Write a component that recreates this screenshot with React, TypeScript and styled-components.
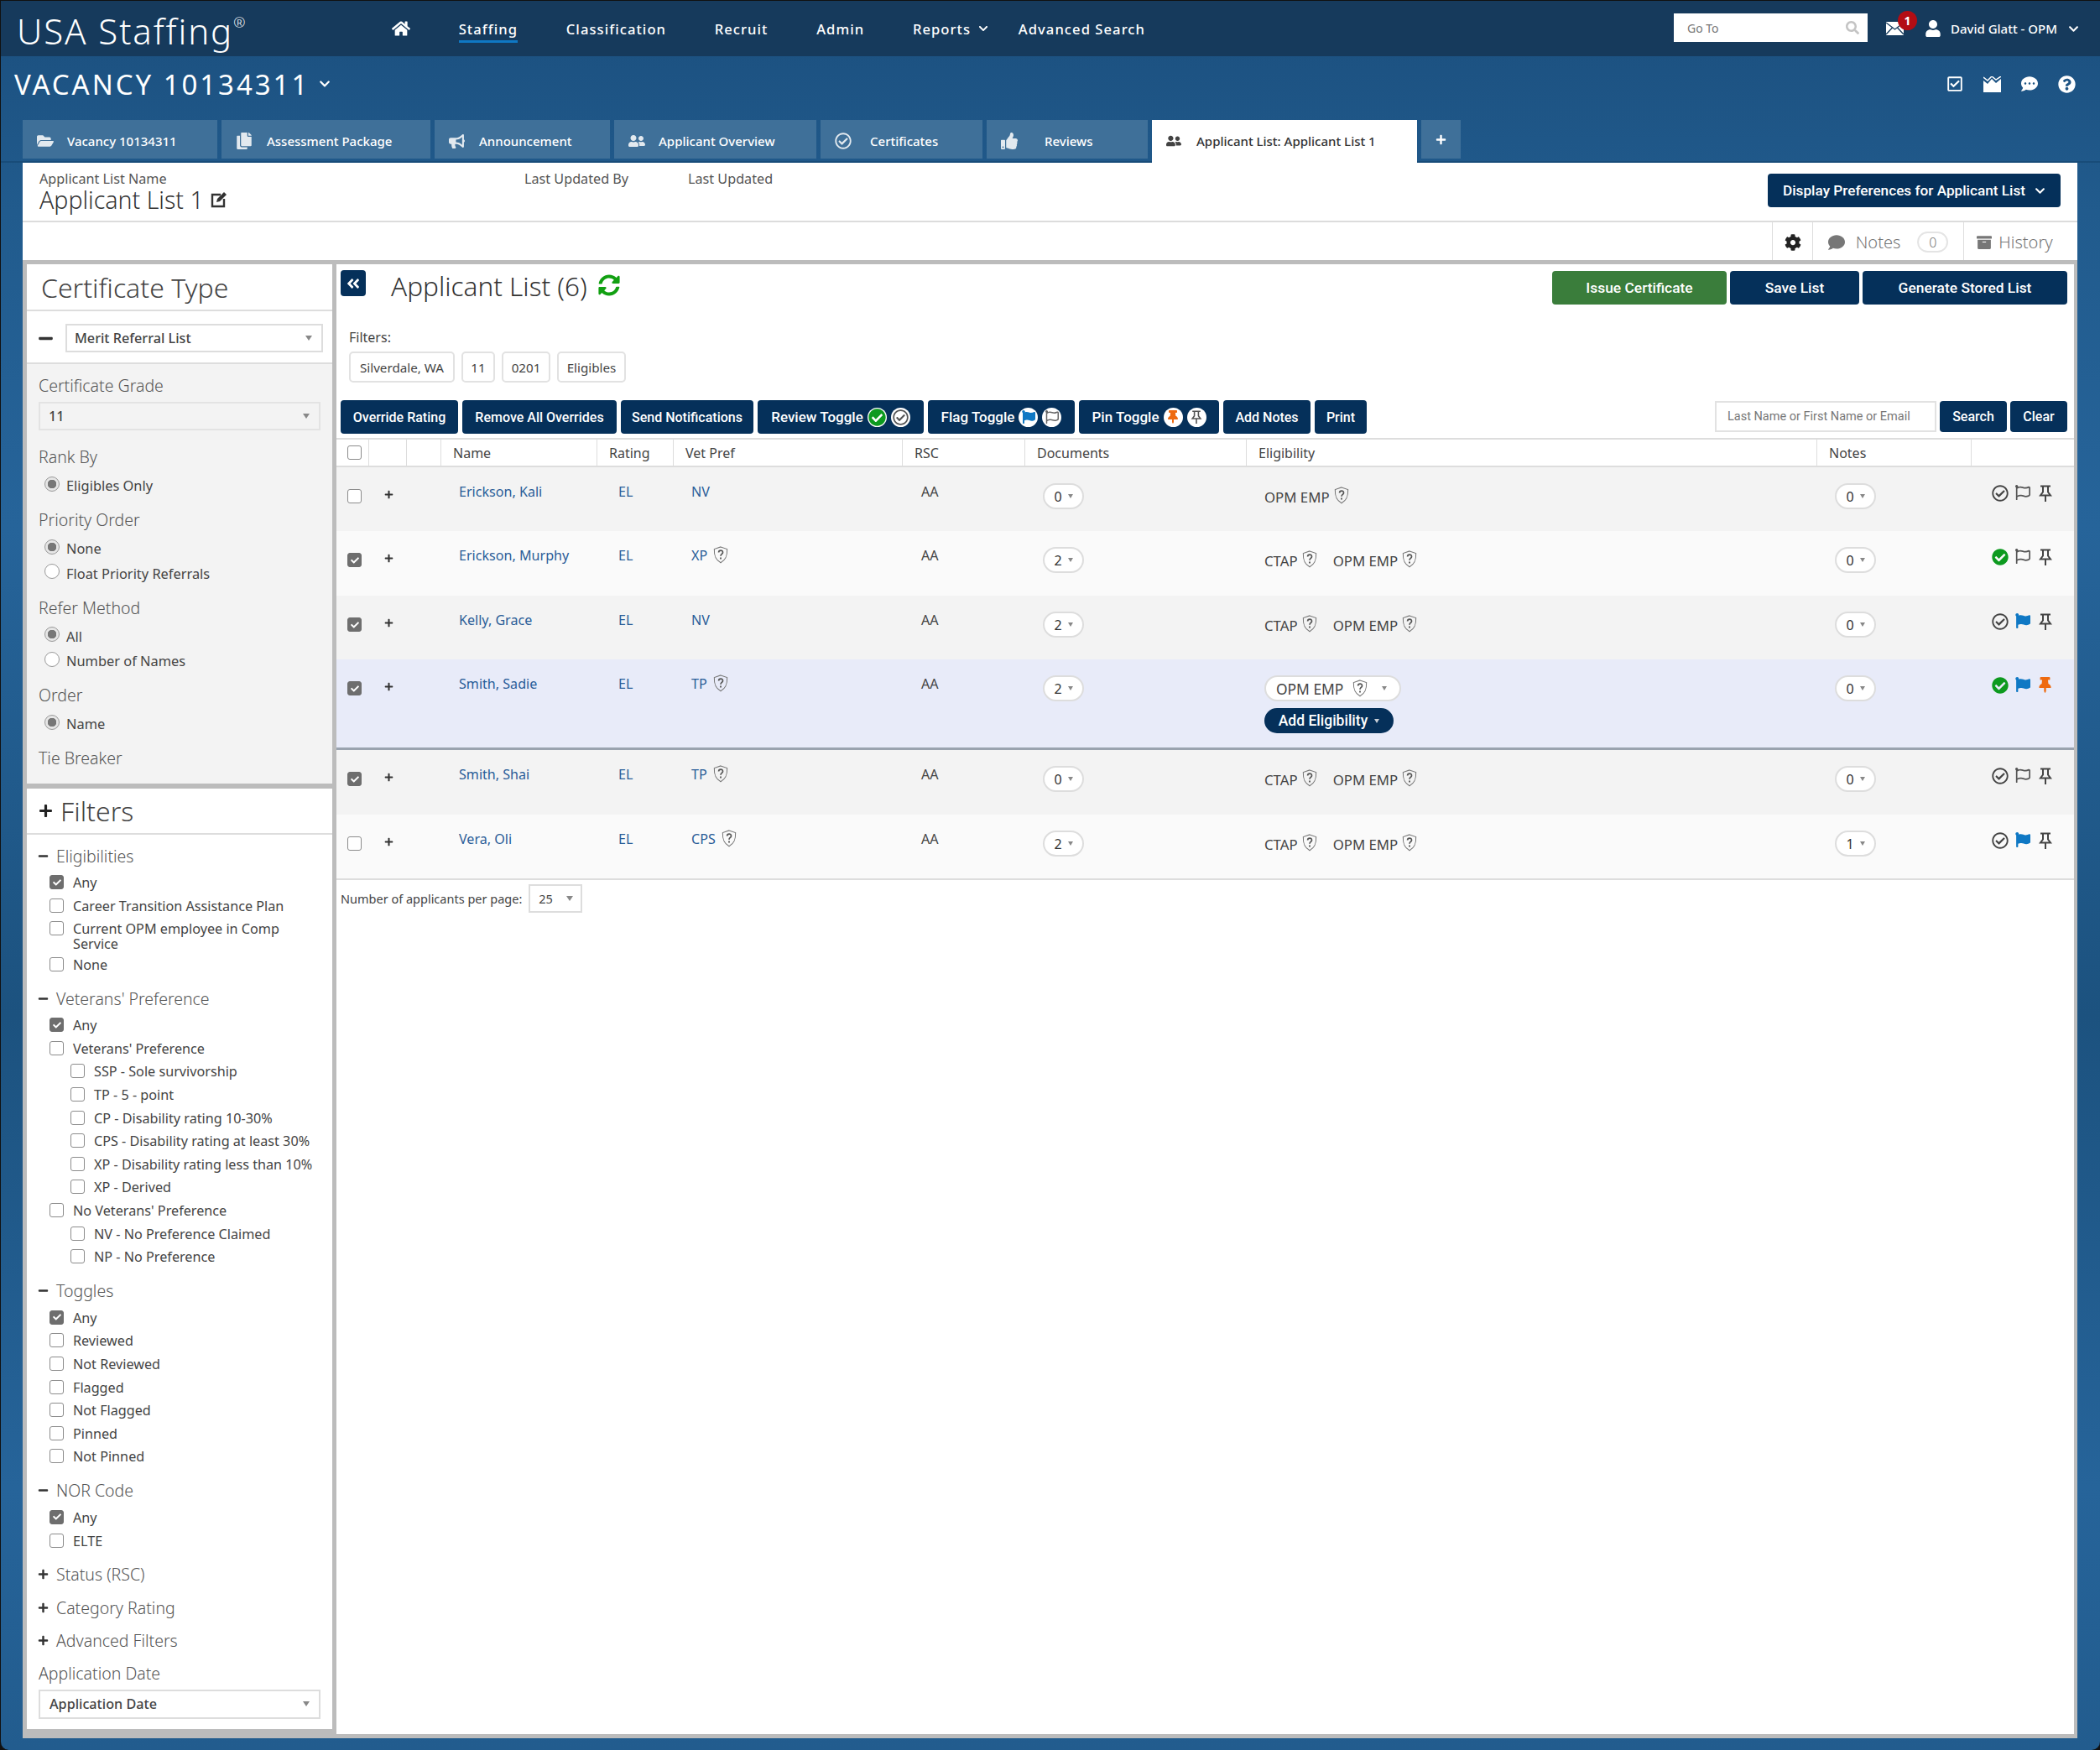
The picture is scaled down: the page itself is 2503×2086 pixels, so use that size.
import React from "react";
import styled, { createGlobalStyle } from "styled-components";
import {
  FaHome, FaChevronDown, FaSearch, FaUser, FaCommentDots, FaQuestionCircle, FaRegCheckSquare,
  FaCopy, FaBullhorn, FaUserFriends, FaRegCheckCircle, FaCheckCircle, FaThumbsUp, FaPlus, FaMinus,
  FaCog, FaComment, FaArchive, FaAngleDoubleLeft, FaSyncAlt, FaFlag, FaRegFlag, FaThumbtack, FaCheck, FaFolderOpen,
} from "react-icons/fa";

const SANS = `"Noto Sans", "Open Sans", sans-serif`;
const ARIAL = `"Roboto", "Liberation Sans", Arial, sans-serif`;
const NAVY = "#05305a";

const Global = createGlobalStyle`
  * { box-sizing: border-box; }
  html, body { margin: 0; padding: 0; background: #111; }
  body { font-family: ${SANS}; color: #444; }
`;

const Page = styled.div`
  width: 2503px;
  height: 2086px;
  border-top: 1px solid #111;
  border-left: 1px solid #111;
  border-radius: 0 0 10px 10px;
  overflow: hidden;
  display: flex;
  flex-direction: column;
  background: linear-gradient(180deg, #1b4f7e 0, #215b8d 12%, #26649a 30%, #1c527f 58%, #26649a 85%, #225c8e 100%);
`;

const TopBar = styled.header`
  height: 66px;
  flex: none;
  display: flex;
  align-items: center;
  padding: 0 25px 0 19px;
  background: #163a5c;
  color: #fff;
`;
const Logo = styled.div`
  width: 447px;
  margin-top: 5px;
  font-size: 42px;
  font-weight: 300;
  letter-spacing: 1.9px;
  line-height: 1;
  sup { font-size: 17px; vertical-align: 20px; line-height: 0; letter-spacing: 0; }
`;
const Nav = styled.nav`
  display: flex;
  align-items: center;
  gap: 57.7px;
  font-size: 16.6px;
  font-weight: 500;
  letter-spacing: 1.05px;
`;
const NavItem = styled.span<{ $active?: boolean; $tight?: boolean }>`
  display: inline-flex;
  align-items: center;
  gap: 9px;
  height: 30px;
  margin-top: ${(p) => (p.$active ? "4px" : "0")};
  margin-right: ${(p) => (p.$tight ? "-22px" : "0")};
  border-bottom: ${(p) => (p.$active ? "3px solid #0f78c4" : "none")};
`;
const TopRight = styled.div`
  margin-left: auto;
  display: flex;
  align-items: center;
`;
const GoTo = styled.div`
  width: 231px;
  height: 34px;
  margin-top: -2px;
  background: #fff;
  color: #777;
  font-size: 14px;
  display: flex;
  align-items: center;
  justify-content: space-between;
  padding: 0 10px 0 16px;
  margin-right: 22px;
`;
const MailWrap = styled.span`
  position: relative;
  display: inline-flex;
  width: 21px;
  margin-right: 25px;
`;
const Badge = styled.span`
  position: absolute;
  left: 14px;
  top: -13px;
  width: 23px;
  height: 23px;
  border-radius: 50%;
  background: #b30d14;
  color: #fff;
  font-size: 14px;
  font-weight: 700;
  display: flex;
  align-items: center;
  justify-content: center;
`;
const UserName = styled.span`
  font-size: 15px;
  font-weight: 500;
  margin: 0 13px 0 11px;
`;

const TitleRow = styled.div`
  height: 76px;
  flex: none;
  display: flex;
  align-items: center;
  padding: 0 29px 10px 16px;
  color: #fff;
`;
const VacancyTitle = styled.h1`
  margin: 0 11px 0 0;
  font-size: 33px;
  font-weight: 400;
  letter-spacing: 2.95px;
  line-height: 1;
`;
const TitleIcons = styled.div`
  margin-left: auto;
  display: flex;
  align-items: center;
  gap: 24px;
`;

const Tabs = styled.div`
  height: 51px;
  flex: none;
  display: flex;
  gap: 5px;
  padding-left: 26px;
  border-bottom: 2px solid #184c79;
`;
const Tab = styled.div<{ $w: number; $text: number; $active?: boolean }>`
  width: ${(p) => p.$w}px;
  height: ${(p) => (p.$active ? "51px" : "46px")};
  flex: none;
  display: flex;
  align-items: center;
  padding-top: ${(p) => (p.$active ? "0" : "4px")};
  padding-bottom: ${(p) => (p.$active ? "1px" : "0")};
  background: ${(p) => (p.$active ? "#fff" : "#3f7099")};
  color: ${(p) => (p.$active ? "#333" : "#fff")};
  font-size: 15px;
  font-weight: 500;
  position: relative;
  z-index: 1;
  svg { margin-left: 17px; flex: none; opacity: 0.85; }
  span { position: absolute; left: ${(p) => p.$text}px; white-space: nowrap; }
`;
const PlusTab = styled.div`
  width: 47px;
  height: 46px;
  background: #3f7099;
  color: #fff;
  display: flex;
  align-items: center;
  justify-content: center;
`;

const Content = styled.main`
  flex: 1;
  min-height: 0;
  margin: 0 27px 14px 26px;
  display: flex;
  flex-direction: column;
  background: #fff;
`;
const Meta = styled.section`
  height: 71px;
  flex: none;
  display: flex;
  border-bottom: 2px solid #dcdcdc;
  padding: 9px 20px 0 20px;
  font-size: 16.2px;
  color: #555;
`;
const MetaName = styled.div`
  width: 578px;
  line-height: 20px;
`;
const MetaLabel = styled.div<{ $w?: number }>`
  width: ${(p) => (p.$w ? `${p.$w}px` : "auto")};
  line-height: 20px;
`;
const ListName = styled.div`
  display: flex;
  align-items: center;
  gap: 8px;
  font-size: 28.5px;
  font-weight: 300;
  line-height: 26px;
  margin-top: 2px;
  color: #333;
`;
const DarkButton = styled.button<{ $w: number; $h?: number; $green?: boolean; $fs?: number }>`
  width: ${(p) => p.$w}px;
  height: ${(p) => p.$h ?? 40}px;
  flex: none;
  border: none;
  border-radius: 4px;
  background: ${(p) => (p.$green ? "#3a7d3b" : NAVY)};
  color: #fff;
  font-family: ${ARIAL};
  font-size: ${(p) => p.$fs ?? 16}px;
  font-weight: 500;
  padding: 0;
  display: inline-flex;
  align-items: center;
  justify-content: center;
  gap: 6px;
  white-space: nowrap;
`;
const PrefsButton = styled(DarkButton)`
  margin: 4px 0 0 auto;
  gap: 11px;
`;
const UtilBar = styled.div`
  height: 45px;
  flex: none;
  display: flex;
  justify-content: flex-end;
`;
const UtilCell = styled.div<{ $w: number; $pr?: number }>`
  width: ${(p) => p.$w}px;
  display: flex;
  align-items: center;
  justify-content: center;
  gap: 8px;
  padding: 2px ${(p) => p.$pr ?? 0}px 0 0;
  border-left: 1px solid #ddd;
  color: #777;
  font-size: 20px;
  font-weight: 300;
`;
const CountPill = styled.span`
  width: 37px;
  height: 25px;
  margin-left: 12px;
  border: 2px solid #e4e4e4;
  border-radius: 13px;
  font-size: 16px;
  display: flex;
  align-items: center;
  justify-content: center;
`;

const Workspace = styled.div`
  flex: 1;
  min-height: 0;
  display: flex;
  gap: 5px;
  padding: 5px 4px 5px 5px;
  background: #bcbcbc;
`;
const Sidebar = styled.aside`
  width: 364px;
  flex: none;
  display: flex;
  flex-direction: column;
  margin-bottom: 6px;
  background: #fff;
`;
const PanelHead = styled.div<{ $h: number; $gap?: number }>`
  height: ${(p) => p.$h}px;
  flex: none;
  display: flex;
  align-items: center;
  gap: ${(p) => p.$gap ?? 11}px;
  padding-left: 14px;
  border-bottom: 2px solid #ddd;
  color: #444;
  font-size: 32px;
  font-weight: 300;
`;
const HeadTitle = styled.span`
  margin-left: 3px;
`;
const TypeRow = styled.div`
  height: 63px;
  flex: none;
  display: flex;
  align-items: center;
  gap: 14px;
  padding: 3px 0 0 13px;
  border-bottom: 2px solid #ddd;
`;
const SelectBox = styled.div<{ $w: number; $muted?: boolean; $h?: number }>`
  width: ${(p) => p.$w}px;
  height: ${(p) => p.$h ?? 34}px;
  flex: none;
  display: flex;
  align-items: center;
  justify-content: space-between;
  padding: 0 11px 0 9px;
  border: 2px solid ${(p) => (p.$muted ? "#e3e3e3" : "#ddd")};
  background: ${(p) => (p.$muted ? "#f3f3f3" : "#fff")};
  font-size: 16.2px;
  font-weight: 500;
  color: #444;
`;
const Caret = styled.i<{ $light?: boolean }>`
  display: inline-block;
  width: 0;
  height: 0;
  flex: none;
  border-left: 4px solid transparent;
  border-right: 4px solid transparent;
  border-top: 6px solid ${(p) => (p.$light ? "#c8ced6" : "#888")};
`;
const CertSection = styled.div`
  height: 506px;
  flex: none;
  padding: 13px 14px 0;
  background: #f3f3f3;
  border-bottom: 6px solid #bcbcbc;
`;
const FieldLabel = styled.div<{ $top?: number }>`
  height: 26px;
  line-height: 26px;
  margin-top: ${(p) => p.$top ?? 13.5}px;
  font-size: 19.5px;
  font-weight: 300;
  color: #555;
`;
const GradeSelect = styled(SelectBox)`
  margin-top: 6px;
  padding-left: 10px;
`;
const RadioList = styled.div`
  margin-top: 6px;
  padding-left: 7px;
`;
const RadioRow = styled.div`
  height: 29.5px;
  display: flex;
  align-items: center;
  gap: 8px;
  font-size: 16.4px;
  font-weight: 400;
  color: #444;
`;
const Radio = styled.span<{ $on?: boolean }>`
  width: 18px;
  height: 18px;
  flex: none;
  margin-top: -4px;
  border-radius: 50%;
  border: 1.5px solid #999;
  background: ${(p) => (p.$on ? "radial-gradient(circle, #777 0 5px, #e6e6e6 5.5px)" : "#fff")};
`;
const FilterBody = styled.div`
  flex: 1;
  padding: 11px 14px 0 13px;
`;
const GroupTitle = styled.div<{ $top?: number }>`
  height: 28px;
  display: flex;
  align-items: center;
  gap: 9px;
  margin-top: ${(p) => p.$top ?? 13}px;
  font-size: 19.5px;
  font-weight: 300;
  color: #555;
  svg { color: #333; }
`;
const Items = styled.div`
  margin-top: 4px;
`;
const Item = styled.div<{ $nested?: boolean; $wrap?: boolean }>`
  display: flex;
  align-items: flex-start;
  gap: 11px;
  padding: 5px 0 ${(p) => (p.$wrap ? "1.5px" : "4.6px")} ${(p) => (p.$nested ? "39px" : "14px")};
  font-size: 16.2px;
  line-height: 18px;
  font-weight: 400;
  color: #444;
`;
const Box = styled.span<{ $on?: boolean }>`
  width: 17px;
  height: 17px;
  flex: none;
  border-radius: 3px;
  border: 1.5px solid ${(p) => (p.$on ? "#6e6e6e" : "#8c8c8c")};
  background: ${(p) => (p.$on ? "#6e6e6e" : "#fff")};
  color: #fff;
  display: inline-flex;
  align-items: center;
  justify-content: center;
`;
const DateLabel = styled(FieldLabel)`
  margin-left: 1px;
`;
const DateSelect = styled(SelectBox)`
  margin: 5.5px 0 0 1px;
  padding-left: 11px;
`;

const MainPanel = styled.section`
  flex: 1;
  min-width: 0;
  display: flex;
  flex-direction: column;
  background: #fff;
`;
const ListHead = styled.div`
  height: 77px;
  flex: none;
  display: flex;
  align-items: flex-start;
  padding: 7px 8px 0 5px;
`;
const CollapseBtn = styled.button`
  width: 30px;
  height: 31px;
  border: none;
  border-radius: 4px;
  background: ${NAVY};
  color: #fff;
  padding: 0;
  display: flex;
  align-items: center;
  justify-content: center;
`;
const ListTitle = styled.h2`
  margin: 0 13px 0 30px;
  font-size: 31.5px;
  font-weight: 300;
  line-height: 38px;
  color: #333;
`;
const RefreshIcon = styled.span`
  display: inline-flex;
  margin-top: 5px;
  color: #12a012;
`;
const ActionGroup = styled.div`
  margin-left: auto;
  display: flex;
  gap: 4px;
  padding-top: 1px;
`;
const FiltersLabel = styled.div`
  margin-left: 15px;
  font-size: 16px;
  line-height: 20px;
  height: 20px;
`;
const Chips = styled.div`
  display: flex;
  gap: 8px;
  margin: 7px 0 0 15px;
`;
const Chip = styled.span<{ $w: number }>`
  width: ${(p) => p.$w}px;
  height: 37px;
  display: flex;
  align-items: center;
  justify-content: center;
  border: 2px solid #e2e2e2;
  border-radius: 5px;
  font-size: 15.2px;
  color: #444;
`;
const Toolbar = styled.div`
  display: flex;
  align-items: flex-start;
  gap: 5px;
  margin-top: 21px;
  padding: 0 8px 0 5px;
`;
const CircleIcon = styled.span`
  width: 23px;
  height: 23px;
  flex: none;
  border-radius: 50%;
  background: #fff;
  display: inline-flex;
  align-items: center;
  justify-content: center;
  margin-left: -1px;
`;
const SearchGroup = styled.div`
  margin-left: auto;
  display: flex;
  gap: 4px;
  padding-top: 1px;
`;
const SearchInput = styled.div`
  width: 264px;
  height: 37px;
  border: 2px solid #e2e2e2;
  display: flex;
  align-items: center;
  padding-left: 13px;
  font-family: ${ARIAL};
  font-size: 14.5px;
  color: #777;
`;

const COLS = "39px 45px 41px 186px 91px 273px 146px 264px 680px 184px 1fr";
const HeaderRow = styled.div`
  display: grid;
  grid-template-columns: ${COLS};
  height: 35px;
  margin-top: 5px;
  border-top: 2px solid #ddd;
  border-bottom: 2px solid #ddd;
  font-size: 16px;
  color: #444;
`;
const HeadCell = styled.div`
  display: flex;
  align-items: center;
  padding-left: 14px;
  border-right: 1px solid #ddd;
  &:last-child { border-right: none; }
`;
const HeadCheck = styled(HeadCell)`
  padding-left: 13px;
`;
const Row = styled.div<{ $tone: "even" | "odd" | "hi"; $h: number }>`
  display: grid;
  grid-template-columns: ${COLS};
  height: ${(p) => p.$h}px;
  background: ${(p) => (p.$tone === "hi" ? "#e8ebf9" : p.$tone === "even" ? "#f3f3f3" : "#fafafa")};
  border-bottom: ${(p) => (p.$tone === "hi" ? "3px solid #9aa3af" : "none")};
  font-size: 16.1px;
  line-height: 20px;
`;
const CheckCell = styled.div`
  display: flex;
  align-items: flex-start;
  padding: 26px 0 0 13px;
`;
const PlusCell = styled.div`
  padding: 27px 0 0 1px;
  display: flex;
  justify-content: center;
  color: #333;
`;
const TextCell = styled.div<{ $link?: boolean; $pad?: number }>`
  padding: 19px 0 0 ${(p) => p.$pad ?? 21}px;
  color: ${(p) => (p.$link ? "#2a5d98" : "#444")};
  display: flex;
  align-items: flex-start;
  gap: 7px;
  white-space: nowrap;
  svg { margin-top: -1px; }
`;
const PillCell = styled.div`
  padding: 19px 0 0 21px;
`;
const Pill = styled.span`
  width: 49px;
  height: 31px;
  display: inline-flex;
  align-items: center;
  justify-content: center;
  gap: 7px;
  background: #fff;
  border: 2px solid #ddd;
  border-radius: 16px;
  font-size: 16px;
  color: #333;
  ${Caret} { border-left-width: 3px; border-right-width: 3px; border-top-width: 5px; }
`;
const EligCell = styled.div`
  padding: 26px 0 0 21px;
  display: flex;
  align-items: flex-start;
  gap: 19px;
  font-size: 16.8px;
  color: #444;
`;
const EligEdit = styled.div`
  padding: 19px 0 0 21px;
  display: flex;
  flex-direction: column;
  align-items: flex-start;
  gap: 8px;
`;
const EligTag = styled.span`
  display: inline-flex;
  align-items: flex-start;
  gap: 5px;
  white-space: nowrap;
  svg { margin-top: -3px; }
`;
const EligSelect = styled.span`
  width: 163px;
  height: 31px;
  display: inline-flex;
  align-items: center;
  padding-left: 12px;
  background: #fff;
  border: 2px solid #ddd;
  border-radius: 16px;
  font-size: 17.4px;
  color: #444;
  svg { margin-left: 11px; }
  ${Caret} { margin-left: 17px; border-left-width: 3px; border-right-width: 3px; border-top-width: 5px; }
`;
const AddElig = styled.span`
  width: 154px;
  height: 30px;
  display: inline-flex;
  align-items: center;
  justify-content: center;
  gap: 8px;
  background: ${NAVY};
  border-radius: 15px;
  color: #fff;
  font-family: ${ARIAL};
  font-size: 17.5px;
  font-weight: 500;
  ${Caret} { border-left-width: 3px; border-right-width: 3px; border-top-width: 5px; }
`;
const RowIcons = styled.div`
  padding: 21px 0 0 24px;
  display: flex;
  align-items: flex-start;
  gap: 8px;
  svg { flex: none; }
`;
const TableEnd = styled.div`
  height: 2px;
  flex: none;
  background: #ddd;
`;
const PerPage = styled.div`
  display: flex;
  align-items: center;
  gap: 8px;
  margin: 5px 0 0 5px;
  font-size: 14.5px;
  color: #444;
`;
const PerPageSelect = styled(SelectBox)`
  font-weight: 400;
  font-size: 14.5px;
  padding: 0 9px 0 10px;
`;

const Shield = ({ size = 18 }: { size?: number }) => (
  <svg width={size} height={size * 1.15} viewBox="0 0 20 23" fill="none" stroke="#777" aria-hidden="true">
    <path d="M10 1 18.5 4c.3 8-1 14-8.5 18C2.5 18 1.200 12 1.500 4Z" strokeWidth="1.200" />
    <path d="M7.300 8.300c.2-3.400 5.500-3.400 5.500-.1 0 2.300-2.800 2.300-2.800 4.800" strokeWidth="1.900" stroke="#555" />
    <path d="M10 15v2.200" strokeWidth="2" stroke="#555" />
  </svg>
);
const MailIcon = () => (
  <svg width="21" height="16" viewBox="0 0 21 16" aria-hidden="true">
    <rect width="21" height="16" fill="#fff" />
    <path d="M0 1 10.500 9 21 1M0 15 7.500 7M21 15 13.500 7" fill="none" stroke="#163a5c" strokeWidth="1.300" />
  </svg>
);
const ChartMail = () => (
  <svg width="21" height="19" viewBox="0 0 21 19" aria-hidden="true">
    <path d="M0 5 5 9l5-6 5 5 6-5v16H0Z" fill="#fff" />
    <path d="M0 1 5 5l5-5 5 4 6-4" fill="none" stroke="#fff" strokeWidth="1.500" />
  </svg>
);
const EditIcon = () => (
  <svg width="20" height="20" viewBox="0 0 20 20" aria-hidden="true">
    <path d="M12 4H2v14h14V9" fill="none" stroke="#333" strokeWidth="2.400" />
    <path d="M7 13l1-4 8-8 3 3-8 8Z" fill="#333" />
  </svg>
);
const PinOutline = ({ size = 20, color = "#444" }: { size?: number; color?: string }) => (
  <svg width={size} height={size} viewBox="0 0 20 20" fill="none" stroke={color} strokeWidth="2" aria-hidden="true">
    <path d="M4 1.500h12M7 1.500v7L4 12.500h12L13 8.500v-7M10 12.500V20" />
  </svg>
);

type Tag = "CTAP" | "OPM EMP";
type RowData = {
  on: boolean; name: string; vet: string; vetQ: boolean; docs: string; elig: Tag[]; notes: string;
  reviewed: boolean; flagged: boolean; pinned: boolean; h: number; tone: "even" | "odd" | "hi"; edit?: boolean;
};
const ROWS: RowData[] = [
  { on: false, name: "Erickson, Kali", vet: "NV", vetQ: false, docs: "0", elig: ["OPM EMP"], notes: "0", reviewed: false, flagged: false, pinned: false, h: 76, tone: "even" },
  { on: true, name: "Erickson, Murphy", vet: "XP", vetQ: true, docs: "2", elig: ["CTAP", "OPM EMP"], notes: "0", reviewed: true, flagged: false, pinned: false, h: 77, tone: "odd" },
  { on: true, name: "Kelly, Grace", vet: "NV", vetQ: false, docs: "2", elig: ["CTAP", "OPM EMP"], notes: "0", reviewed: false, flagged: true, pinned: false, h: 76, tone: "even" },
  { on: true, name: "Smith, Sadie", vet: "TP", vetQ: true, docs: "2", elig: ["OPM EMP"], notes: "0", reviewed: true, flagged: true, pinned: true, h: 108, tone: "hi", edit: true },
  { on: true, name: "Smith, Shai", vet: "TP", vetQ: true, docs: "0", elig: ["CTAP", "OPM EMP"], notes: "0", reviewed: false, flagged: false, pinned: false, h: 77, tone: "even" },
  { on: false, name: "Vera, Oli", vet: "CPS", vetQ: true, docs: "2", elig: ["CTAP", "OPM EMP"], notes: "1", reviewed: false, flagged: true, pinned: false, h: 76, tone: "odd" },
];

const TABS = [
  { label: "Vacancy 10134311", w: 232, text: 53, icon: <FaFolderOpen size={20} /> },
  { label: "Assessment Package", w: 249, text: 54, icon: <FaCopy size={20} /> },
  { label: "Announcement", w: 209, text: 53, icon: <FaBullhorn size={19} /> },
  { label: "Applicant Overview", w: 241, text: 53, icon: <FaUserFriends size={20} /> },
  { label: "Certificates", w: 193, text: 59, icon: <FaRegCheckCircle size={20} /> },
  { label: "Reviews", w: 192, text: 69, icon: <FaThumbsUp size={20} /> },
];

const Check = ({ on }: { on?: boolean }) => <Box $on={on}>{on && <FaCheck size={10} />}</Box>;

const FilterItem = ({ label, on, nested, wrap }: { label: string; on?: boolean; nested?: boolean; wrap?: boolean }) => (
  <Item $nested={nested} $wrap={wrap}>
    <Check on={on} />
    <span>{label}</span>
  </Item>
);

const Group = ({ title, top, open = true, children }: { title: string; top?: number; open?: boolean; children?: React.ReactNode }) => (
  <>
    <GroupTitle $top={top}>{open ? <FaMinus size={13} /> : <FaPlus size={13} />}{title}</GroupTitle>
    {children && <Items>{children}</Items>}
  </>
);

const Radios = ({ items }: { items: [string, boolean][] }) => (
  <RadioList>
    {items.map(([l, on]) => (
      <RadioRow key={l}><Radio $on={on} /><span>{l}</span></RadioRow>
    ))}
  </RadioList>
);

const DocPill = ({ value }: { value: string }) => (
  <Pill>{value}<Caret /></Pill>
);

export default function App() {
  return (
    <>
      <Global />
      <Page>
        <TopBar>
          <Logo>USA Staffing<sup>®</sup></Logo>
          <Nav>
            <FaHome size={22} />
            <NavItem $active>Staffing</NavItem>
            <NavItem>Classification</NavItem>
            <NavItem>Recruit</NavItem>
            <NavItem>Admin</NavItem>
            <NavItem $tight>Reports <FaChevronDown size={12} /></NavItem>
            <NavItem>Advanced Search</NavItem>
          </Nav>
          <TopRight>
            <GoTo>Go To<FaSearch size={16} color="#c4c4c4" /></GoTo>
            <MailWrap><MailIcon /><Badge>1</Badge></MailWrap>
            <FaUser size={20} />
            <UserName>David Glatt - OPM</UserName>
            <FaChevronDown size={13} />
          </TopRight>
        </TopBar>

        <TitleRow>
          <VacancyTitle>VACANCY 10134311</VacancyTitle>
          <FaChevronDown size={14} />
          <TitleIcons>
            <FaRegCheckSquare size={20} />
            <ChartMail />
            <FaCommentDots size={20} />
            <FaQuestionCircle size={21} />
          </TitleIcons>
        </TitleRow>

        <Tabs>
          {TABS.map((t) => (
            <Tab key={t.label} $w={t.w} $text={t.text}>{t.icon}<span>{t.label}</span></Tab>
          ))}
          <Tab $w={316} $text={53} $active><FaUserFriends size={18} color="#222" /><span>Applicant List: Applicant List 1</span></Tab>
          <PlusTab><FaPlus size={13} /></PlusTab>
        </Tabs>

        <Content>
          <Meta>
            <MetaName>
              Applicant List Name
              <ListName>Applicant List 1 <EditIcon /></ListName>
            </MetaName>
            <MetaLabel $w={195}>Last Updated By</MetaLabel>
            <MetaLabel>Last Updated</MetaLabel>
            <PrefsButton $w={349} $fs={17.2}>Display Preferences for Applicant List <FaChevronDown size={13} /></PrefsButton>
          </Meta>
          <UtilBar>
            <UtilCell $w={48}><FaCog size={20} color="#222" /></UtilCell>
            <UtilCell $w={180}><FaComment size={20} color="#777" /> <span>&nbsp;Notes</span><CountPill>0</CountPill></UtilCell>
            <UtilCell $w={136} $pr={14}><FaArchive size={18} color="#777" />History</UtilCell>
          </UtilBar>

          <Workspace>
            <Sidebar>
              <PanelHead $h={56}><HeadTitle>Certificate Type</HeadTitle></PanelHead>
              <TypeRow>
                <FaMinus size={19} color="#333" />
                <SelectBox $w={307}>Merit Referral List<Caret /></SelectBox>
              </TypeRow>
              <CertSection>
                <FieldLabel $top={0}>Certificate Grade</FieldLabel>
                <GradeSelect $w={336} $muted>11<Caret /></GradeSelect>
                <FieldLabel $top={19}>Rank By</FieldLabel>
                <Radios items={[["Eligibles Only", true]]} />
                <FieldLabel>Priority Order</FieldLabel>
                <Radios items={[["None", true], ["Float Priority Referrals", false]]} />
                <FieldLabel>Refer Method</FieldLabel>
                <Radios items={[["All", true], ["Number of Names", false]]} />
                <FieldLabel>Order</FieldLabel>
                <Radios items={[["Name", true]]} />
                <FieldLabel>Tie Breaker</FieldLabel>
              </CertSection>
              <PanelHead $h={55} $gap={9}><FaPlus size={17} color="#222" />Filters</PanelHead>
              <FilterBody>
                <Group title="Eligibilities" top={0}>
                  <FilterItem label="Any" on />
                  <FilterItem label="Career Transition Assistance Plan" />
                  <FilterItem label="Current OPM employee in Comp Service" wrap />
                  <FilterItem label="None" />
                </Group>
                <Group title="Veterans' Preference">
                  <FilterItem label="Any" on />
                  <FilterItem label="Veterans' Preference" />
                  <FilterItem nested label="SSP - Sole survivorship" />
                  <FilterItem nested label="TP - 5 - point" />
                  <FilterItem nested label="CP - Disability rating 10-30%" />
                  <FilterItem nested label="CPS - Disability rating at least 30%" />
                  <FilterItem nested label="XP - Disability rating less than 10%" />
                  <FilterItem nested label="XP - Derived" />
                  <FilterItem label="No Veterans' Preference" />
                  <FilterItem nested label="NV - No Preference Claimed" />
                  <FilterItem nested label="NP - No Preference" />
                </Group>
                <Group title="Toggles">
                  <FilterItem label="Any" on />
                  <FilterItem label="Reviewed" />
                  <FilterItem label="Not Reviewed" />
                  <FilterItem label="Flagged" />
                  <FilterItem label="Not Flagged" />
                  <FilterItem label="Pinned" />
                  <FilterItem label="Not Pinned" />
                </Group>
                <Group title="NOR Code">
                  <FilterItem label="Any" on />
                  <FilterItem label="ELTE" />
                </Group>
                <Group title="Status (RSC)" top={12} open={false} />
                <Group title="Category Rating" top={12} open={false} />
                <Group title="Advanced Filters" top={11} open={false} />
                <DateLabel $top={13}>Application Date</DateLabel>
                <DateSelect $w={336} $h={35}>Application Date<Caret /></DateSelect>
              </FilterBody>
            </Sidebar>

            <MainPanel>
              <ListHead>
                <CollapseBtn aria-label="Collapse"><FaAngleDoubleLeft size={18} /></CollapseBtn>
                <ListTitle>Applicant List (6)</ListTitle>
                <RefreshIcon><FaSyncAlt size={26} /></RefreshIcon>
                <ActionGroup>
                  <DarkButton $w={208} $green $fs={17.4}>Issue Certificate</DarkButton>
                  <DarkButton $w={154} $fs={17.4}>Save List</DarkButton>
                  <DarkButton $w={244} $fs={17.4}>Generate Stored List</DarkButton>
                </ActionGroup>
              </ListHead>
              <FiltersLabel>Filters:</FiltersLabel>
              <Chips>
                <Chip $w={126}>Silverdale, WA</Chip>
                <Chip $w={40}>11</Chip>
                <Chip $w={58}>0201</Chip>
                <Chip $w={82}>Eligibles</Chip>
              </Chips>
              <Toolbar>
                <DarkButton $w={140}>Override Rating</DarkButton>
                <DarkButton $w={184}>Remove All Overrides</DarkButton>
                <DarkButton $w={158}>Send Notifications</DarkButton>
                <DarkButton $w={198} $fs={17}>Review Toggle
                  <CircleIcon><FaCheckCircle size={21} color="#0d9a1f" /></CircleIcon>
                  <CircleIcon><FaRegCheckCircle size={19} color="#555" /></CircleIcon>
                </DarkButton>
                <DarkButton $w={175} $fs={17}>Flag Toggle
                  <CircleIcon><FaFlag size={16} color="#0f78c4" /></CircleIcon>
                  <CircleIcon><FaRegFlag size={16} color="#666" /></CircleIcon>
                </DarkButton>
                <DarkButton $w={167} $fs={17}>Pin Toggle
                  <CircleIcon><FaThumbtack size={16} color="#ee6a10" /></CircleIcon>
                  <CircleIcon><PinOutline size={16} color="#555" /></CircleIcon>
                </DarkButton>
                <DarkButton $w={104}>Add Notes</DarkButton>
                <DarkButton $w={62}>Print</DarkButton>
                <SearchGroup>
                  <SearchInput>Last Name or First Name or Email</SearchInput>
                  <DarkButton $w={80} $h={37}>Search</DarkButton>
                  <DarkButton $w={68} $h={37}>Clear</DarkButton>
                </SearchGroup>
              </Toolbar>

              <HeaderRow>
                <HeadCheck><Check /></HeadCheck>
                <HeadCell />
                <HeadCell />
                <HeadCell>Name</HeadCell>
                <HeadCell>Rating</HeadCell>
                <HeadCell>Vet Pref</HeadCell>
                <HeadCell>RSC</HeadCell>
                <HeadCell>Documents</HeadCell>
                <HeadCell>Eligibility</HeadCell>
                <HeadCell>Notes</HeadCell>
                <HeadCell />
              </HeaderRow>
              {ROWS.map((r) => (
                <Row key={r.name} $tone={r.tone} $h={r.h}>
                  <CheckCell><Check on={r.on} /></CheckCell>
                  <PlusCell><FaPlus size={11} /></PlusCell>
                  <div />
                  <TextCell $link>{r.name}</TextCell>
                  <TextCell $link $pad={25}>EL</TextCell>
                  <TextCell $link>{r.vet}{r.vetQ && <Shield />}</TextCell>
                  <TextCell $pad={22}>AA</TextCell>
                  <PillCell><DocPill value={r.docs} /></PillCell>
                  {r.edit ? (
                    <EligEdit>
                      <EligSelect>OPM EMP<Shield /><Caret /></EligSelect>
                      <AddElig>Add Eligibility<Caret $light /></AddElig>
                    </EligEdit>
                  ) : (
                    <EligCell>
                      {r.elig.map((e) => (
                        <EligTag key={e}>{e}<Shield /></EligTag>
                      ))}
                    </EligCell>
                  )}
                  <PillCell><DocPill value={r.notes} /></PillCell>
                  <RowIcons>
                    {r.reviewed ? <FaCheckCircle size={20} color="#0d9a1f" /> : <FaRegCheckCircle size={20} color="#444" />}
                    {r.flagged ? <FaFlag size={18} color="#0f78c4" /> : <FaRegFlag size={18} color="#555" />}
                    {r.pinned ? <FaThumbtack size={19} color="#ee6a10" /> : <PinOutline />}
                  </RowIcons>
                </Row>
              ))}
              <TableEnd />
              <PerPage>
                Number of applicants per page:
                <PerPageSelect $w={64}>25<Caret /></PerPageSelect>
              </PerPage>
            </MainPanel>
          </Workspace>
        </Content>
      </Page>
    </>
  );
}
